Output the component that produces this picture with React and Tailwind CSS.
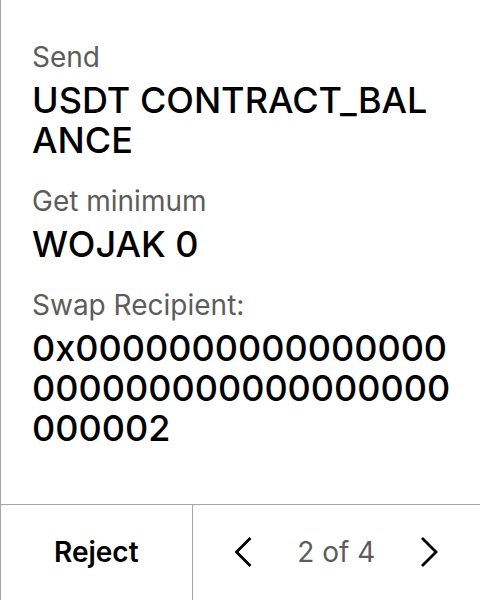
import React from "react";

const fields = [
  { label: "Send", value: "USDT CONTRACT_BALANCE" },
  { label: "Get minimum", value: "WOJAK 0" },
  { label: "Swap Recipient:", value: "0x0000000000000000000000000000000000000002" },
];

function Chevron({ d }) {
  return (
    <svg width="40" height="40" viewBox="0 0 40 40" fill="none" stroke="black" strokeWidth="2.8" aria-hidden="true">
      <path d={d} />
    </svg>
  );
}

export default function App() {
  return (
    <main className="flex min-h-screen flex-col border-l border-[#a6a6a6] bg-white font-['Inter',sans-serif] text-black">
      <dl className="flex grow flex-col gap-6 pt-10 pr-7 pb-8 pl-[31px]">
        {fields.map((field) => (
          <div key={field.label}>
            <dt className="text-[28px] leading-[34px] text-[#5c5c5c]">{field.label}</dt>
            <dd className="mt-1.5 text-[36px] leading-10 font-medium break-all">{field.value}</dd>
          </div>
        ))}
      </dl>
      <footer className="flex h-24 border-t border-[#a6a6a6]">
        <button type="button" className="w-2/5 border-r border-[#a6a6a6] pb-0.5 text-[28px] font-semibold">
          Reject
        </button>
        <nav aria-label="Pages" className="flex grow items-center justify-between px-8 pb-0.5">
          <button type="button" aria-label="Previous page">
            <Chevron d="M25.5 6 L11.5 20 L25.5 34" />
          </button>
          <span className="text-[28px] text-[#5c5c5c]">2 of 4</span>
          <button type="button" aria-label="Next page">
            <Chevron d="M14 6 L28 20 L14 34" />
          </button>
        </nav>
      </footer>
    </main>
  );
}
